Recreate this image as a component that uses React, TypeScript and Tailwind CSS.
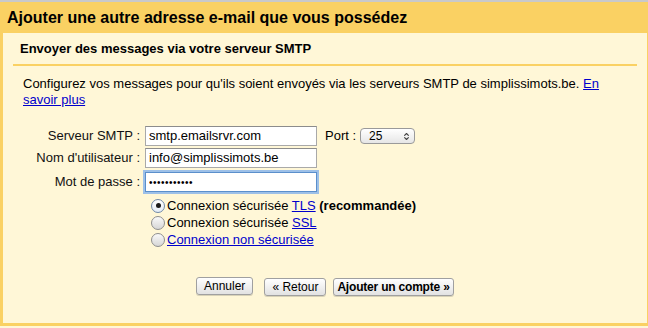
import { ChevronsUpDown } from 'lucide-react';

function Field({ label, value, type = 'text', focused = false }: { label: string; value: string; type?: string; focused?: boolean }) {
  return (
    <div className="flex items-center">
      <label className="w-[139px] pr-[2px] text-right text-[13px] text-[#111]">{label}</label>
      <div
        className={`ml-[3px] flex h-[20px] w-[172px] items-center bg-white ${
          focused
            ? 'border border-[#5b8fcb] shadow-[0_0_0_2px_#9dc0e8]'
            : 'border border-[#a9a9a9] border-t-[#8c8c8c]'
        }`}
      >
        <input
          type={type}
          defaultValue={value}
          readOnly
          className={`w-full bg-transparent px-[3px] text-black outline-none ${
            type === 'password' ? 'text-[10px] tracking-[0.5px]' : 'text-[13px]'
          }`}
        />
      </div>
    </div>
  );
}

function Radio({ checked, children }: { checked?: boolean; children: React.ReactNode }) {
  return (
    <div className="flex h-[17px] items-center">
      <span
        className={`flex h-[14px] w-[14px] items-center justify-center rounded-full border ${
          checked
            ? 'border-[#6f88a8] bg-gradient-to-b from-white to-[#e4ecf6]'
            : 'border-[#8e8e8e] bg-gradient-to-b from-[#fafafa] to-[#d6d6d6]'
        }`}
      >
        {checked && <span className="h-[5px] w-[5px] rounded-full bg-[#1b1b1b]" />}
      </span>
      <span className="ml-[2px] text-[13px] text-black">{children}</span>
    </div>
  );
}

function Btn({ children, bold }: { children: React.ReactNode; bold?: boolean }) {
  return (
    <button
      className={`h-[18px] rounded-[3px] border border-[#a0a0a0] bg-gradient-to-b from-white to-[#e2e2e2] text-[12px] leading-none text-black shadow-[0_1px_0_#d8d2b8] ${
        bold ? 'px-[3px] font-bold tracking-[-0.2px]' : 'px-[7px]'
      }`}
    >
      {children}
    </button>
  );
}

export default function App() {
  return (
    <div className="h-[328px] w-[648px] overflow-hidden bg-[#fff7d7] font-['Liberation_Sans',Arial,sans-serif]">
      <div className="h-[2px] bg-[#c9c9c9]" />
      <div className="bg-[#fad163] pb-[3px] pl-[3px] pr-[1px]">
        <div className="flex h-[31px] items-center pl-[4px] text-[16px] font-bold text-black">
          Ajouter une autre adresse e-mail que vous possédez
        </div>
        <div className="h-[290px] bg-[#fff7d7] pl-[10px] pr-[10px]">
          <div className="flex h-[31px] items-center pl-[7px] text-[13px] font-bold text-black">
            Envoyer des messages via votre serveur SMTP
          </div>
          <div className="h-[2px] bg-[#fad163]" />

          <p className="mt-[10px] w-[600px] pl-[10px] text-[13px] leading-[16px] text-black">
            Configurez vos messages pour qu'ils soient envoyés via les serveurs SMTP de simplissimots.be.{' '}
            <a href="#" className="text-[#0000cc] underline">
              En savoir plus
            </a>
          </p>

          {/* form */}
          <div className="-ml-[10px] mt-[18px] flex flex-col">
            <div className="flex items-center">
              <Field label="Serveur SMTP :" value="smtp.emailsrvr.com" />
              <span className="ml-[8px] text-[13px] text-black">Port :</span>
              <div className="ml-[4px] flex h-[16px] w-[55px] items-center justify-between rounded-[4px] border border-[#9a9a9a] bg-gradient-to-b from-white to-[#e6e6e6] pl-[8px] pr-[3px] text-[12px] text-black">
                25
                <ChevronsUpDown size={9} strokeWidth={3} className="text-[#444]" />
              </div>
            </div>
            <div className="mt-[2px]">
              <Field label="Nom d'utilisateur :" value="info@simplissimots.be" />
            </div>
            <div className="mt-[4px]">
              <Field label="Mot de passe :" value="monmotdepas" type="password" focused />
            </div>

            <div className="ml-[148px] mt-[5px] flex flex-col">
              <Radio checked>
                Connexion sécurisée <a href="#" className="text-[#0000cc] underline">TLS</a>{' '}
                <b>(recommandée)</b>
              </Radio>
              <Radio>
                Connexion sécurisée <a href="#" className="text-[#0000cc] underline">SSL</a>
              </Radio>
              <Radio>
                <a href="#" className="text-[#0000cc] underline">Connexion non sécurisée</a>
              </Radio>
            </div>

            <div className="ml-[193px] mt-[26px] flex items-center">
              <Btn>Annuler</Btn>
              <span className="ml-[11px]">
                <Btn>« Retour</Btn>
              </span>
              <span className="ml-[7px]">
                <Btn bold>Ajouter un compte »</Btn>
              </span>
            </div>
          </div>
        </div>
      </div>
    </div>
  );
}
